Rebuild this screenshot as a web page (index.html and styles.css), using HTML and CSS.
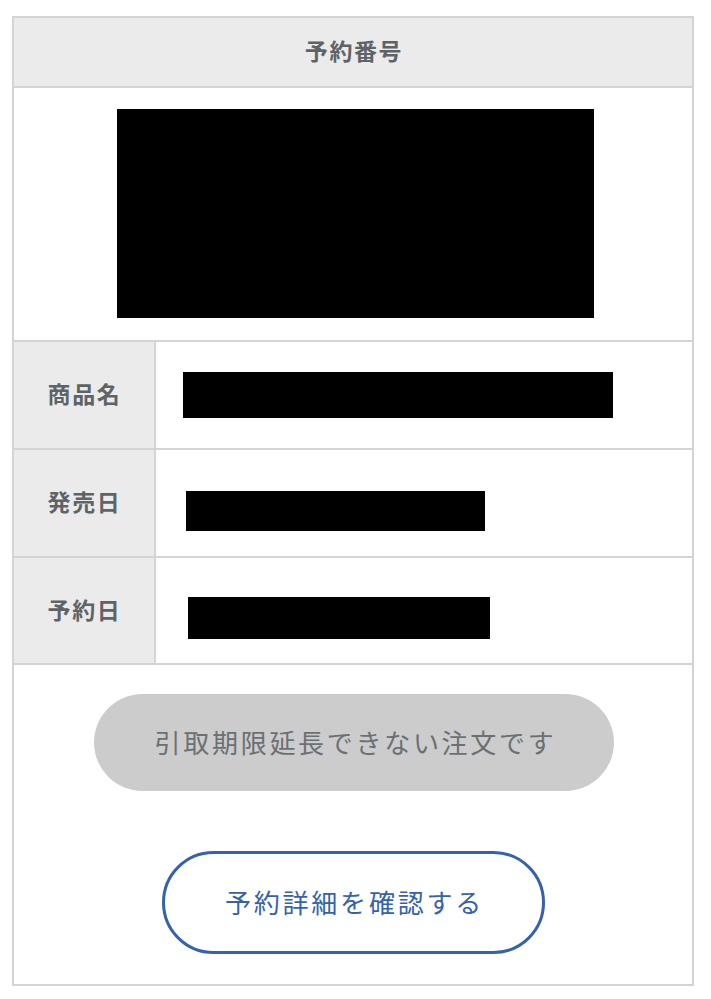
FILE: index.html
```html
<!DOCTYPE html>
<html lang="ja">
<head>
<meta charset="utf-8">
<link rel="stylesheet" href="styles.css">
</head>
<body>
<div class="card">
  <div class="head">予約番号</div>
  <div class="code"><div class="redact code-box"></div></div>
  <div class="row">
    <div class="label">商品名</div>
    <div class="value"><div class="redact bar1"></div></div>
  </div>
  <div class="row">
    <div class="label">発売日</div>
    <div class="value"><div class="redact bar2"></div></div>
  </div>
  <div class="row">
    <div class="label">予約日</div>
    <div class="value"><div class="redact bar3"></div></div>
  </div>
  <div class="actions">
    <div class="btn-disabled">引取期限延長できない注文です</div>
    <a class="btn-outline">予約詳細を確認する</a>
  </div>
</div>
</body>
</html>
```
FILE: styles.css
```css
* { box-sizing: border-box; }
html, body { margin: 0; padding: 0; background: #fff; }
body {
  font-family: "Noto Sans CJK JP", "Noto Sans", sans-serif;
  padding: 16px 17px 0 12px;
}
.card {
  width: 682px;
  border: 2px solid #d4d4d4;
}
.head {
  height: 70px;
  background: #ebebeb;
  border-bottom: 2px solid #d4d4d4;
  display: flex;
  align-items: center;
  justify-content: center;
  font-size: 23px;
  font-weight: 700;
  letter-spacing: 1.6px;
  color: #5e6367;
  padding: 0 0 5px 2px;
}
.code {
  height: 254px;
  border-bottom: 2px solid #d4d4d4;
  padding: 21px 0 0 103px;
}
.redact { background: #000; }
.code-box { width: 477px; height: 209px; }
.row {
  display: flex;
  height: 108px;
  border-bottom: 2px solid #d4d4d4;
}
.row:nth-of-type(5) { height: 107px; }
.label {
  width: 142px;
  background: #ebebeb;
  border-right: 2px solid #d4d4d4;
  display: flex;
  align-items: center;
  justify-content: center;
  font-size: 23px;
  font-weight: 700;
  letter-spacing: 1.6px;
  color: #5e6367;
  padding: 0 0 4px 1px;
}
.value { flex: 1; }
.bar1 { margin: 30px 0 0 27px; width: 430px; height: 46px; }
.bar2 { margin: 41px 0 0 30px; width: 299px; height: 40px; }
.bar3 { margin: 39px 0 0 32px; width: 302px; height: 42px; }
.actions {
  display: flex;
  flex-direction: column;
  align-items: center;
  padding: 29px 0 30px;
}
.btn-disabled {
  width: 520px;
  height: 97px;
  margin-left: 2px;
  border-radius: 49px;
  background: #cccccc;
  color: #6a7074;
  font-size: 26px;
  letter-spacing: 2.7px;
  display: flex;
  align-items: center;
  justify-content: center;
  padding: 0 0 3px 3px;
}
.btn-outline {
  margin-top: 60px;
  width: 383px;
  height: 103px;
  border: 3px solid #3462ad;
  border-radius: 52px;
  color: #3462ad;
  font-size: 26px;
  letter-spacing: 2.8px;
  display: flex;
  align-items: center;
  justify-content: center;
  text-decoration: none;
  padding: 0 0 3px 3px;
}
```
